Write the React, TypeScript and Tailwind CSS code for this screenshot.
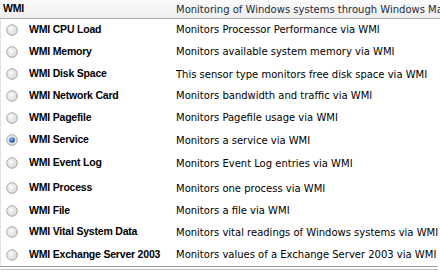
import React from 'react'

interface Sensor {
  name: string
  desc: string
  h: string
}

const sensors: Sensor[] = [
  { name: 'WMI CPU Load', desc: 'Monitors Processor Performance via WMI', h: 'h-[22px]' },
  { name: 'WMI Memory', desc: 'Monitors available system memory via WMI', h: 'h-[22px]' },
  { name: 'WMI Disk Space', desc: 'This sensor type monitors free disk space via WMI', h: 'h-[23px]' },
  { name: 'WMI Network Card', desc: 'Monitors bandwidth and traffic via WMI', h: 'h-[21px]' },
  { name: 'WMI Pagefile', desc: 'Monitors Pagefile usage via WMI', h: 'h-[23px]' },
  { name: 'WMI Service', desc: 'Monitors a service via WMI', h: 'h-[22px]' },
  { name: 'WMI Event Log', desc: 'Monitors Event Log entries via WMI', h: 'h-[25px]' },
  { name: 'WMI Process', desc: 'Monitors one process via WMI', h: 'h-[25px]' },
  { name: 'WMI File', desc: 'Monitors a file via WMI', h: 'h-[21px]' },
  { name: 'WMI Vital System Data', desc: 'Monitors vital readings of Windows systems via WMI', h: 'h-[22px]' },
  { name: 'WMI Exchange Server 2003', desc: 'Monitors values of a Exchange Server 2003 via WMI', h: 'h-[23px]' },
]

const Radio: React.FC<{ checked?: boolean }> = ({ checked }) => (
  <svg width="12" height="12" viewBox="0 0 12 12" className="shrink-0">
    <defs>
      <radialGradient id="rg-off" cx="0.35" cy="0.35" r="0.75">
        <stop offset="0" stopColor="#ffffff" />
        <stop offset="1" stopColor="#cfcfcf" />
      </radialGradient>
      <radialGradient id="dot" cx="0.4" cy="0.35" r="0.7">
        <stop offset="0" stopColor="#9ccbf4" />
        <stop offset="0.6" stopColor="#2a63b8" />
        <stop offset="1" stopColor="#173b78" />
      </radialGradient>
    </defs>
    <circle cx="6" cy="6" r="5.3" fill="url(#rg-off)" stroke="#a8a8a8" />
    <circle cx="6" cy="6" r="3.8" fill="none" stroke="#e6e6e6" />
    {checked && <circle cx="6" cy="6" r="2.8" fill="url(#dot)" />}
  </svg>
)

const App: React.FC = () => {
  return (
    <div
      className="w-[440px] h-[272px] overflow-hidden bg-white text-[10px] text-black"
      style={{ fontFamily: '"DejaVu Sans", Verdana, sans-serif' }}
    >
      {/* Header */}
      <div className="flex h-[19px] items-center bg-gradient-to-b from-[#fbfbfb] to-[#eeeeee] border-b border-[#a9a9a9] whitespace-nowrap">
        <div className="w-[176px] shrink-0 pl-[3px] font-bold text-[10.5px] tracking-[-0.2px] font-['Liberation_Sans',Arial,sans-serif]">
          WMI
        </div>
        <div className="flex-1 overflow-hidden text-[#1e2a3a]">Monitoring of Windows systems through Windows Management Instrumentation</div>
      </div>

      {/* Sensor list */}
      <div className="border-l border-[#e2e2e2] h-[247px] flex flex-col">
        {sensors.map((s) => (
          <div key={s.name} className={`flex items-center whitespace-nowrap ${s.h}`}>
            <div className="w-[28px] shrink-0 flex pl-[5px]">
              <Radio checked={s.name === 'WMI Service'} />
            </div>
            <div className="w-[147px] shrink-0 overflow-hidden font-bold text-[10.5px] tracking-[-0.2px] font-['Liberation_Sans',Arial,sans-serif]">
              {s.name}
            </div>
            <div className="flex-1 overflow-hidden">{s.desc}</div>
          </div>
        ))}
      </div>

      {/* Bottom double line */}
      <div className="mr-[2px] border-t border-[#a0a0a0] h-[4px] border-b border-b-[#c4c4c4]" />
    </div>
  )
}

export default App
